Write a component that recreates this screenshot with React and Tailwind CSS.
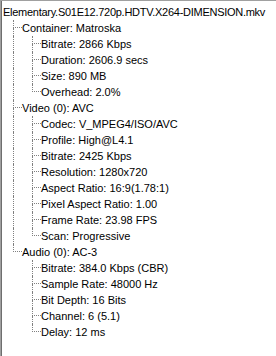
const tree = {
  label: "Elementary.S01E12.720p.HDTV.X264-DIMENSION.mkv",
  children: [
    {
      label: "Container: Matroska",
      children: [
        { label: "Bitrate: 2866 Kbps" },
        { label: "Duration: 2606.9 secs" },
        { label: "Size: 890 MB" },
        { label: "Overhead: 2.0%" },
      ],
    },
    {
      label: "Video (0): AVC",
      children: [
        { label: "Codec: V_MPEG4/ISO/AVC" },
        { label: "Profile: High@L4.1" },
        { label: "Bitrate: 2425 Kbps" },
        { label: "Resolution: 1280x720" },
        { label: "Aspect Ratio: 16:9(1.78:1)" },
        { label: "Pixel Aspect Ratio: 1.00" },
        { label: "Frame Rate: 23.98 FPS" },
        { label: "Scan: Progressive" },
      ],
    },
    {
      label: "Audio (0): AC-3",
      children: [
        { label: "Bitrate: 384.0 Kbps (CBR)" },
        { label: "Sample Rate: 48000 Hz" },
        { label: "Bit Depth: 16 Bits" },
        { label: "Channel: 6 (5.1)" },
        { label: "Delay: 12 ms" },
      ],
    },
  ],
};

// flatten into rows, each with a list of guide cells: "pipe" | "blank" | "tee" | "ell"
function flatten(node, guides, rows) {
  rows.push({ label: node.label, guides });
  const kids = node.children || [];
  kids.forEach((kid, i) => {
    const last = i === kids.length - 1;
    const carry = guides.map((g) => (g === "tee" || g === "pipe" ? "pipe" : "blank"));
    flatten(kid, [...carry, last ? "ell" : "tee"], rows);
  });
  return rows;
}

const dot = "border-dotted border-[#808080]";

function Guide({ kind }) {
  if (kind === "blank") return <div className="w-[19px] h-4 shrink-0" />;
  if (kind === "pipe")
    return (
      <div className="w-[19px] h-4 shrink-0 pl-[10px]">
        <div className={`h-4 border-l ${dot}`} />
      </div>
    );
  return (
    <div className="w-[19px] h-4 shrink-0 pl-[10px] flex flex-col">
      <div className={`h-2 w-[9px] border-l border-b ${dot}`} />
      {kind === "tee" && <div className={`h-2 border-l ${dot}`} />}
    </div>
  );
}

export default function App() {
  const rows = flatten(tree, [], []);
  return (
    <div className="w-[276px] h-[356px] bg-white border-t border-l border-[#a0a0a0] overflow-hidden">
      <div
        className="h-full border-l border-[#6e6e6e] pt-[3px] pl-[1px] text-[11px] text-black"
        style={{ fontFamily: '"Liberation Sans", Arial, sans-serif' }}
      >
        {rows.map((r, i) => (
          <div key={i} className="flex h-4 items-center whitespace-nowrap">
            {r.guides.map((g, j) => (
              <Guide key={j} kind={g} />
            ))}
            <span className={i === 0 ? "leading-4 tracking-[-0.27px]" : "leading-4"}>
              {r.label}
            </span>
          </div>
        ))}
      </div>
    </div>
  );
}
